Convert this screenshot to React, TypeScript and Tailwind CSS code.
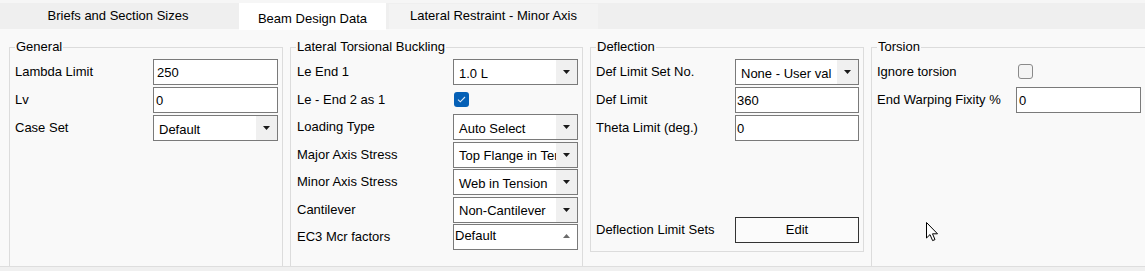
import React from "react";

const font = { fontFamily: '"Liberation Sans", Arial, sans-serif' };

function Caret({ up = false, color = "#1a1a1a" }: { up?: boolean; color?: string }) {
  return (
    <svg width="7" height="4" viewBox="0 0 7 4" className="block">
      {up ? <path d="M0 4 L3.5 0 L7 4 Z" fill={color} /> : <path d="M0 0 L7 0 L3.5 4 Z" fill={color} />}
    </svg>
  );
}

function TextBox({ value, pl = "pl-[2px]" }: { value: string; pl?: string }) {
  return (
    <div className={`h-[26px] w-full border border-[#7a7a7a] bg-white flex items-center ${pl} text-[13px] text-black leading-none`}>
      {value}
    </div>
  );
}

function Select({ value }: { value: string }) {
  return (
    <div className="h-[26px] w-full border border-[#7a7a7a] bg-white flex items-stretch text-[13px] text-black leading-none">
      <div className="flex-1 flex items-center pl-[5px] overflow-hidden whitespace-nowrap pt-[2px]">{value}</div>
      <div className="w-[21px] bg-[#f0f0f0] flex items-center justify-center">
        <Caret />
      </div>
    </div>
  );
}

function CheckBox({ checked }: { checked: boolean }) {
  return checked ? (
    <div className="w-[15px] h-[15px] rounded-[3px] bg-[#0560b6] flex items-center justify-center">
      <svg width="9" height="7" viewBox="0 0 9 7">
        <path d="M1 3.6 L3.3 5.8 L8 1" stroke="#dfe9f5" strokeWidth="1.1" fill="none" />
      </svg>
    </div>
  ) : (
    <div className="w-[15px] h-[15px] rounded-[3px] border border-[#8a8a8a] bg-[#f4f4f4]" />
  );
}

function Group({
  title,
  className,
  children,
}: {
  title: string;
  className: string;
  children: React.ReactNode;
}) {
  return (
    <div className={`relative border border-[#dcdcdc] ${className}`}>
      <div className="absolute left-[5px] top-[-9px] bg-[#f9f9f9] px-[1px] text-[13px] leading-[16px] text-black">
        {title}
      </div>
      {children}
    </div>
  );
}

function Row({ label, h = "h-[28px]", children }: { label: string; h?: string; children: React.ReactNode }) {
  return (
    <>
      <div className={`${h} flex items-center text-[13px] text-black whitespace-nowrap`}>{label}</div>
      <div className={`${h} flex items-center`}>{children}</div>
    </>
  );
}

export default function App() {
  return (
    <div className="w-[1145px] h-[271px] bg-[#f0f0f0] overflow-hidden relative" style={font}>
      {/* tab bar */}
      <div className="h-[29px] bg-[#efefef] flex items-end gap-[3px] relative">
        <div className="absolute inset-x-0 top-0 h-[3px] bg-[#f6f6f6]" />
        <div className="w-[236px] h-[26px] bg-[#efefef] flex items-center justify-center text-[13px] text-black pb-[1px]">
          Briefs and Section Sizes
        </div>
        <div className="w-[147px] h-[27px] mb-[-1px] bg-white flex items-center justify-center text-[13px] text-black pt-[5px] z-10">
          Beam Design Data
        </div>
        <div className="w-[209px] h-[25px] bg-[#f3f3f3] flex items-center justify-center text-[13px] text-black pb-[1px]">
          Lateral Restraint - Minor Axis
        </div>
      </div>

      {/* content */}
      <div className="h-[238px] bg-[#f9f9f9] border-b border-[#dedede] overflow-hidden flex gap-[7px] pl-[9px] pt-[18px]">
        <Group title="General" className="w-[274px] h-[260px] shrink-0">
          <div className="grid grid-cols-[138px_125px] pl-[5px] pt-[10px]">
            <Row label="Lambda Limit">
              <TextBox value="250" pl="pl-[3px]" />
            </Row>
            <Row label="Lv">
              <TextBox value="0" />
            </Row>
            <Row label="Case Set">
              <Select value="Default" />
            </Row>
          </div>
        </Group>

        <Group title="Lateral Torsional Buckling" className="w-[293px] h-[260px] shrink-0">
          <div className="grid grid-cols-[156px_125px] pl-[6px] pt-[10px]">
            <Row label="Le End 1">
              <Select value="1.0 L" />
            </Row>
            <Row label="Le - End 2 as 1" h="h-[27px]">
              <div className="pl-[1px]">
                <CheckBox checked />
              </div>
            </Row>
            <Row label="Loading Type">
              <Select value="Auto Select" />
            </Row>
            <Row label="Major Axis Stress" h="h-[27px]">
              <Select value="Top Flange in Tension" />
            </Row>
            <Row label="Minor Axis Stress">
              <Select value="Web in Tension" />
            </Row>
            <Row label="Cantilever" h="h-[27px]">
              <Select value="Non-Cantilever" />
            </Row>
            <Row label="EC3 Mcr factors">
              <div className="h-[26px] w-full border border-[#7a7a7a] bg-white flex items-center text-[13px] text-black leading-none">
                <div className="flex-1 pl-[1px] pb-[3px]">Default</div>
                <div className="w-[21px] flex items-center justify-center pb-[3px]">
                  <Caret up color="#6b6b6b" />
                </div>
              </div>
            </Row>
          </div>
        </Group>

        <Group title="Deflection" className="w-[274px] h-[205px] shrink-0">
          <div className="flex flex-col h-full">
            <div className="grid grid-cols-[139px_124px] pl-[5px] pt-[10px]">
              <Row label="Def Limit Set No.">
                <Select value="None - User val" />
              </Row>
              <Row label="Def Limit">
                <TextBox value="360" pl="pl-[1px]" />
              </Row>
              <Row label="Theta Limit (deg.)">
                <TextBox value="0" pl="pl-[1px]" />
              </Row>
            </div>
            <div className="flex-1" />
            <div className="grid grid-cols-[139px_124px] pl-[5px] pb-[8px]">
              <div className="h-[26px] flex items-center text-[13px] text-black">Deflection Limit Sets</div>
              <div className="h-[26px] border border-[#333] bg-[#fbfbfb] flex items-center justify-center text-[13px] text-black">
                Edit
              </div>
            </div>
          </div>
        </Group>

        <Group title="Torsion" className="w-[280px] h-[260px] shrink-0">
          <div className="grid grid-cols-[139px_125px] pl-[5px] pt-[10px]">
            <Row label="Ignore torsion">
              <div className="pl-[2px] pb-[1px]">
                <CheckBox checked={false} />
              </div>
            </Row>
            <Row label="End Warping Fixity %">
              <TextBox value="0" pl="pl-[2px]" />
            </Row>
          </div>
        </Group>
      </div>

      {/* mouse cursor overlay */}
      <svg className="absolute left-[926px] top-[222px]" width="13" height="20" viewBox="0 0 13 20">
        <path
          d="M0.5 0.5 L0.5 16 L4 12.6 L6.6 18.6 L9 17.6 L6.5 11.8 L11.5 11.8 Z"
          fill="#ffffff"
          stroke="#000000"
          strokeWidth="1"
          strokeLinejoin="miter"
        />
      </svg>
    </div>
  );
}
